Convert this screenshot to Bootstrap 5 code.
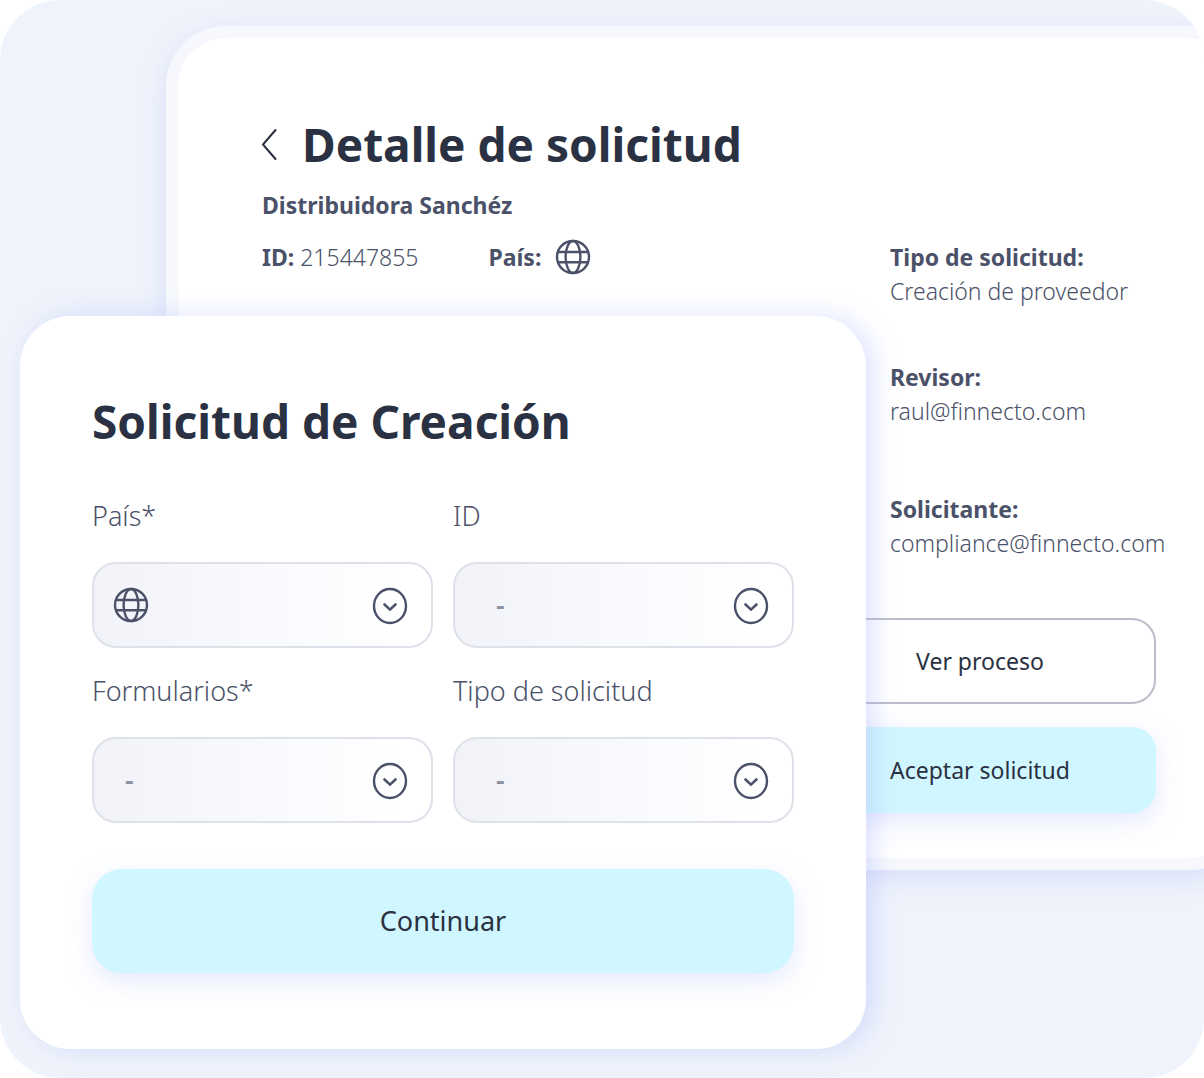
<!DOCTYPE html>
<html lang="es">
<head>
<meta charset="utf-8">
<meta name="viewport" content="width=device-width, initial-scale=1">
<title>Solicitud de Creación</title>
<link href="https://cdn.jsdelivr.net/npm/bootstrap@5.3.0/dist/css/bootstrap.min.css" rel="stylesheet">
<style>
  :root { --ink: #2a3142; --slate: #4a5168; --aqua: #d0f6ff; }
  body { background: #fff; color: var(--slate); font-family: "Noto Sans", "Open Sans", sans-serif; font-size: 23px; line-height: 34px; }
  .stage { min-height: 100vh; background: #eff3fb; border-radius: 60px; overflow: hidden; grid-template-columns: minmax(0, 1fr); }
  .stage > * { grid-area: 1 / 1; align-self: start; }
  .detail-panel { margin: 26px -46px 0 166px; padding: 74px 82px 45px 84px; background: #fff; background-clip: padding-box; border: 12px solid #f6f8fd; border-radius: 60px; box-shadow: 0 8px 24px rgba(180, 192, 250, .36); }
  .form-panel { margin: 316px 338px 29px 20px; padding: 73px 72px 76px; background: #fff; border-radius: 50px; box-shadow: 8px 0 24px rgba(165, 180, 255, .36); }
  .panel-title { color: var(--ink); font-size: 46px; line-height: 64px; font-weight: 700; margin: 0; white-space: nowrap; }
  .back-link { width: 40px; color: var(--ink); }
  .thin { font-weight: 300; }
  .sub-name { margin: 12px 0 17px; }
  .pais-fact { margin-left: 70px; gap: 14px; }
  .side-col { width: 352px; flex: none; padding-top: 64px; }
  .facts { padding-left: 86px; margin-bottom: 58px; white-space: nowrap; }
  .facts dd { font-weight: 300; margin: 0; }
  .fact-reviewer { margin-top: 52px; }
  .fact-requester { margin-top: 64px; }
  .btn-panel { height: 86px; border-radius: 24px; font-size: 23px; font-weight: 400; color: var(--ink); --bs-btn-hover-bg: #c2f0fb; --bs-btn-hover-color: var(--ink); }
  .btn-line { border: 2px solid #bcbdca; background: #fff; margin-bottom: 23px; }
  .btn-aqua { background: var(--aqua); border: 0; box-shadow: 0 8px 24px rgba(180, 190, 255, .34); }
  .btn-big { height: 104px; border-radius: 30px; font-size: 27px; margin-top: 46px; }
  .fields { --bs-gutter-x: 20px; row-gap: 23px; padding-top: 43px; }
  .field-label { display: block; font-size: 27px; line-height: 40px; font-weight: 300; margin-bottom: 26px; }
  .picker { height: 86px; border: 2px solid #dfe1ea; border-radius: 24px; padding: 0 72px 0 41px; background: linear-gradient(90deg, #f2f3f9, #f8fafe 50%, #fff 90%); color: #8b90a3; font-size: 27px; font-weight: 600; }
  .picker.near { padding-left: 31px; }
  .pick-icon { position: absolute; right: 25px; top: 25px; pointer-events: none; }
  .pick-globe { position: absolute; left: 21px; top: 25px; pointer-events: none; }
</style>
<script src="https://cdn.jsdelivr.net/npm/bootstrap@5.3.0/dist/js/bootstrap.bundle.min.js"></script>
</head>
<body>
<svg class="d-none" aria-hidden="true">
  <symbol id="globe" viewBox="0 0 36 36"><g fill="none" stroke="currentColor" stroke-width="2.4"><circle cx="18" cy="18" r="16"/><ellipse cx="18" cy="18" rx="7.4" ry="16"/><path d="M3 13H33M3 23.300H33"/></g></symbol>
  <symbol id="chev" viewBox="0 0 36 38"><g fill="none" stroke="currentColor" stroke-width="2.400"><ellipse cx="18" cy="19" rx="16" ry="17"/><path d="M12.500 17.500L18 22.600L23.500 17.500" stroke-width="2.600" stroke-linecap="round"/></g></symbol>
</svg>
<main class="stage d-grid">
  <section class="detail-panel">
    <header class="d-flex align-items-center">
      <a class="back-link d-flex" href="#" aria-label="Volver"><svg width="16" height="32" viewBox="0 0 16 32" fill="none" stroke="currentColor" stroke-width="2" stroke-linecap="round" stroke-linejoin="round"><path d="M13.500 2L1 16.500L13.500 31"/></svg></a>
      <h1 class="panel-title">Detalle de solicitud</h1>
    </header>
    <div class="d-flex">
      <div class="flex-grow-1">
        <p class="fw-bold sub-name">Distribuidora Sanchéz</p>
        <div class="d-flex align-items-center">
          <div><b>ID:</b> <span class="thin">215447855</span></div>
          <div class="pais-fact d-flex align-items-center"><b>País:</b><svg width="36" height="36" role="img" aria-label="Global"><use href="#globe"/></svg></div>
        </div>
      </div>
      <div class="side-col">
        <dl class="facts">
          <dt>Tipo de solicitud:</dt><dd>Creación de proveedor</dd>
          <dt class="fact-reviewer">Revisor:</dt><dd>raul@finnecto.com</dd>
          <dt class="fact-requester">Solicitante:</dt><dd>compliance@finnecto.com</dd>
        </dl>
        <button type="button" class="btn btn-panel btn-line w-100">Ver proceso</button>
        <button type="button" class="btn btn-panel btn-aqua w-100">Aceptar solicitud</button>
      </div>
    </div>
  </section>

  <form class="form-panel">
    <h2 class="panel-title">Solicitud de Creación</h2>
    <div class="row fields">
      <div class="col-6">
        <label class="field-label" for="pais">País*</label>
        <div class="position-relative"><select id="pais" class="form-select picker"><option value="" label=" "></option></select>
          <svg class="pick-globe" width="36" height="36"><use href="#globe"/></svg><svg class="pick-icon" width="36" height="38"><use href="#chev"/></svg></div>
      </div>
      <div class="col-6">
        <label class="field-label" for="ident">ID</label>
        <div class="position-relative"><select id="ident" class="form-select picker"><option>-</option></select><svg class="pick-icon" width="36" height="38"><use href="#chev"/></svg></div>
      </div>
      <div class="col-6">
        <label class="field-label" for="forms">Formularios*</label>
        <div class="position-relative"><select id="forms" class="form-select picker near"><option>-</option></select><svg class="pick-icon" width="36" height="38"><use href="#chev"/></svg></div>
      </div>
      <div class="col-6">
        <label class="field-label" for="tipo">Tipo de solicitud</label>
        <div class="position-relative"><select id="tipo" class="form-select picker"><option>-</option></select><svg class="pick-icon" width="36" height="38"><use href="#chev"/></svg></div>
      </div>
    </div>
    <button type="button" class="btn btn-panel btn-aqua btn-big w-100">Continuar</button>
  </form>
</main>
</body>
</html>
